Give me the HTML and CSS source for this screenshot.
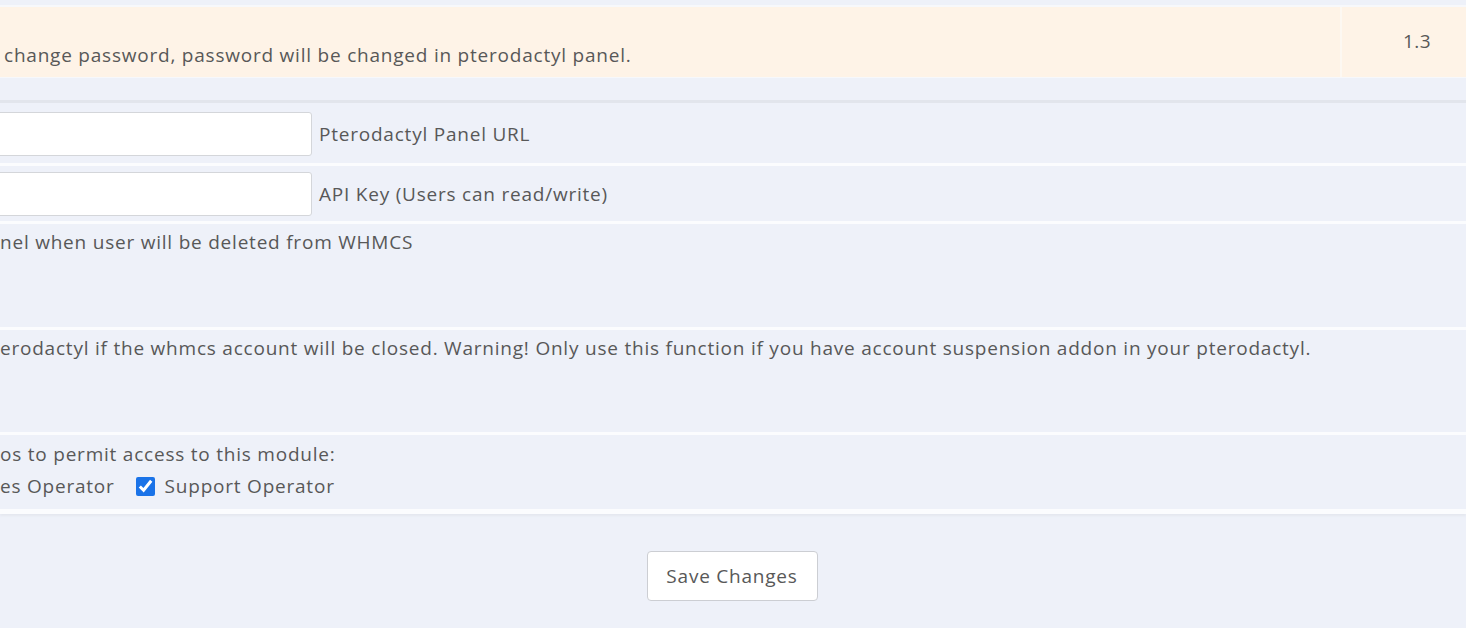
FILE: index.html
```html
<!DOCTYPE html>
<html>
  <head>
    <title>Addon Modules</title>
    <link rel="stylesheet" href="styles.css">
  </head>
  <body>
    <div class="module-row">
      <div class="module-desc">change password, password will be changed in pterodactyl panel.</div>
      <div class="module-version">1.3</div>
    </div>

    <form class="config">
      <div class="field field-input">
        <input class="text-input" type="text">
        <span class="hint">Pterodactyl Panel URL</span>
      </div>
      <div class="field field-input field-short">
        <input class="text-input" type="text">
        <span class="hint">API Key (Users can read/write)</span>
      </div>
      <div class="field field-tall">
        <span>nel when user will be deleted from WHMCS</span>
      </div>
      <div class="field field-tall field-warn">
        <span>erodactyl if the whmcs account will be closed. Warning! Only use this function if you have account suspension addon in your pterodactyl.</span>
      </div>
      <div class="field field-access">
        <div>os to permit access to this module:</div>
        <div class="roles">
          <span>es Operator</span>
          <label class="role"><input type="checkbox" checked> Support Operator</label>
        </div>
      </div>
    </form>

    <div class="actions">
      <button type="submit" class="btn">Save Changes</button>
    </div>
  </body>
</html>
```

FILE: styles.css
```css
html, body {
  height: 100%;
}
body {
  margin: 0;
  background-color: #eef1f9;
  font-family: 'Open Sans', 'Liberation Sans', sans-serif;
  font-size: 19px;
  letter-spacing: 0.78px;
  color: #585858;
  overflow: hidden;
}

.module-row {
  display: flex;
  margin-top: 5px;
  border-top: 2px solid #f7f8fb;
  border-bottom: 1px solid #f7f8fb;
  background-color: #fef3e7;
  height: 70px;
}

.module-desc {
  flex: 1;
  padding: 0 0 9px 4px;
  display: flex;
  align-items: flex-end;
  border-right: 2px solid #fdf8f2;
}

.module-version {
  width: 124px;
  box-sizing: border-box;
  padding: 21px 0 0 61px;
  letter-spacing: 0.4px;
}

.config {
  margin-top: 22px;
  padding-top: 1px;
  border-top: 3px solid #e2e5ec;
  border-bottom: 2px solid #fbfcfe;
  box-shadow: 0 2px 2px #e5e8ef;
}

.field {
  border-bottom: 3px solid #fbfcfe;
  line-height: 26px;
}

.field-input {
  display: flex;
  align-items: center;
  height: 59px;
}
.field-short {
  height: 55px;
}

.text-input {
  width: 322px;
  height: 44px;
  margin: 1px 7px 0 -10px;
  box-sizing: border-box;
  border: 1px solid #d4d6da;
  border-radius: 3px;
  background-color: #fff;
  font-size: 18px;
}

.field-tall {
  height: 106px;
  padding-top: 5px;
  box-sizing: border-box;
}
.field-warn {
  height: 105px;
}

.field-access {
  height: 77px;
  padding-top: 6px;
  box-sizing: border-box;
}

.roles {
  display: flex;
  align-items: center;
  margin-top: 6px;
}

.role {
  display: flex;
  align-items: center;
  margin-left: 21px;
}

.role input {
  width: 19px;
  height: 19px;
  margin: 0 10px 0 0;
  accent-color: #1a73e8;
}

.actions {
  display: flex;
  justify-content: center;
  padding-top: 37px;
}

.btn {
  width: 171px;
  height: 50px;
  margin-left: -2px;
  background-color: #fff;
  border: 1px solid #ccced3;
  border-radius: 4px;
  font-family: inherit;
  font-size: 19px;
  letter-spacing: 0.78px;
  color: #585858;
}
```
